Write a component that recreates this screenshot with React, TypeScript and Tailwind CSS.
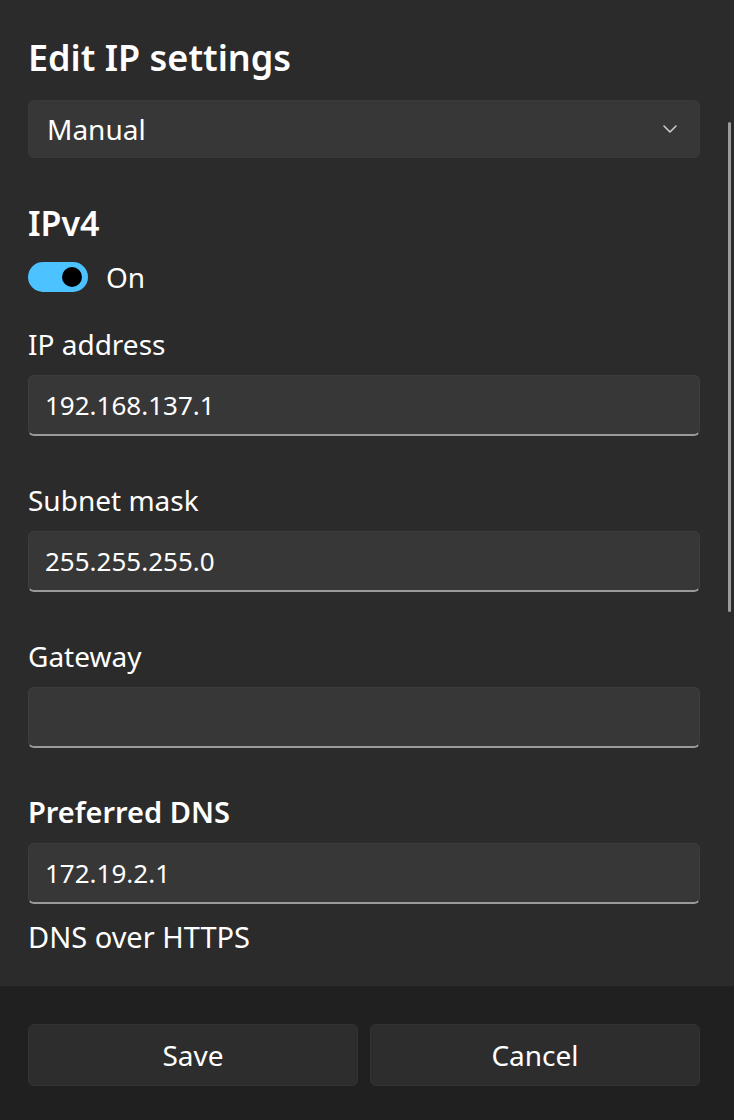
import React from 'react';

const font = { fontFamily: '"Noto Sans", "Open Sans", sans-serif' };

interface FieldProps {
  label: string;
  value?: string;
  strong?: boolean;
  first?: boolean;
}

function Field({ label, value, strong, first }: FieldProps) {
  return (
    <div className={first ? 'mt-[34px]' : 'mt-[46px]'}>
      <div className={`leading-[36px] text-white ${strong ? 'text-[29px] font-semibold' : 'text-[28px]'}`}>{label}</div>
      <div className="mt-[13px] h-[61px] rounded-[6px] bg-[#373737] border border-[#3d3d3d] border-b-2 border-b-[#9a9a9a] flex items-center px-[16px]">
        <span className="text-[26px] text-white">{value}</span>
      </div>
    </div>
  );
}

export default function App() {
  return (
    <div className="w-full h-[1120px] bg-[#2b2b2b] flex flex-col overflow-hidden" style={font}>
      <div className="relative flex-1 pl-[28px] pr-[34px] pt-[36px]">
        <h1 className="text-[36px] leading-[44px] font-semibold text-white">Edit IP settings</h1>

        <div className="mt-[20px] h-[58px] rounded-[6px] bg-[#373737] border border-[#3a3a3a] flex items-center justify-between pl-[18px] pr-[22px]">
          <span className="text-[28px] text-white">Manual</span>
          <svg width="14" height="8" viewBox="0 0 14 8" fill="none">
            <path d="M1 1l6 6 6-6" stroke="#d0d0d0" strokeWidth="1.5" strokeLinecap="round" strokeLinejoin="round" />
          </svg>
        </div>

        <h2 className="mt-[43px] text-[34px] leading-[44px] font-semibold text-white">IPv4</h2>
        <div className="mt-[17px] flex items-center gap-[18px]">
          <div className="w-[60px] h-[30px] rounded-full bg-[#4cc2ff] flex items-center justify-end pr-[6px]">
            <div className="w-[20px] h-[20px] rounded-full bg-black" />
          </div>
          <span className="text-[28px] leading-[30px] text-white">On</span>
        </div>

        <Field label="IP address" value="192.168.137.1" first />
        <Field label="Subnet mask" value="255.255.255.0" />
        <Field label="Gateway" value="" />
        <Field label="Preferred DNS" value="172.19.2.1" strong />

        <div className="mt-[15px] text-[29px] leading-[36px] text-white">DNS over HTTPS</div>

        <div className="absolute right-[3px] top-[122px] w-[3px] h-[490px] rounded-full bg-[#9b9b9b]" />
      </div>

      <div className="h-[134px] bg-[#202020] pl-[28px] pr-[34px] pt-[38px] flex gap-[12px]">
        <button className="flex-1 h-[62px] rounded-[6px] bg-[#2d2d2d] border border-[#333333] text-[28px] text-white">
          Save
        </button>
        <button className="flex-1 h-[62px] rounded-[6px] bg-[#2d2d2d] border border-[#333333] text-[28px] text-white">
          Cancel
        </button>
      </div>
    </div>
  );
}
